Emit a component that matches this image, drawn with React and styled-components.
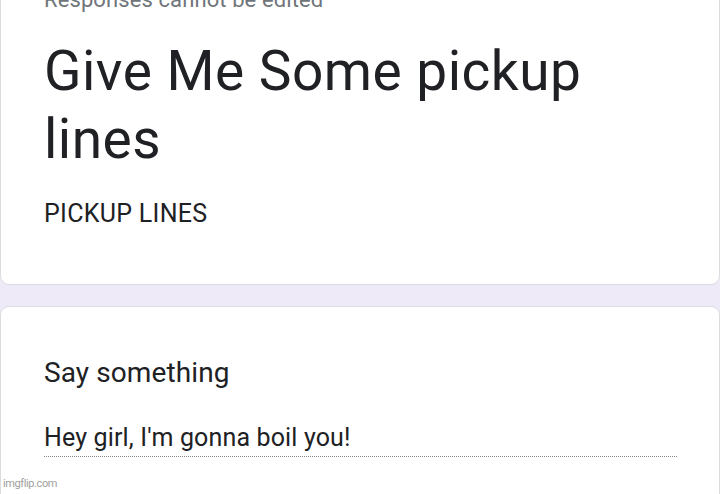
import React from "react";
import styled, { createGlobalStyle } from "styled-components";

const GlobalStyle = createGlobalStyle`
  html, body {
    margin: 0;
    padding: 0;
    background: #eeeaf7;
    font-family: Roboto, "Liberation Sans", sans-serif;
    overflow: hidden;
  }
`;

const Page = styled.div`
  width: 720px;
  height: 494px;
  display: flex;
  flex-direction: column;
  gap: 21px;
  position: relative;
  overflow: hidden;
`;

const Card = styled.section`
  background: #fff;
  border: 1px solid #dadce0;
  border-radius: 9px;
  padding: ${(p) => p.$padding || "0 43px"};
  flex-shrink: 0;
`;

const HeaderCard = styled(Card)`
  margin-top: -30px;
`;

const Notice = styled.div`
  font-size: 22px;
  line-height: 26px;
  letter-spacing: 0.1px;
  color: #70757a;
`;

const Title = styled.h1`
  margin: 24px 0 0;
  width: 610px;
  font-size: 55px;
  font-weight: 400;
  line-height: 68px;
  letter-spacing: 0.5px;
  color: #202124;
`;

const Description = styled.p`
  margin: 26px 0 0;
  font-size: 25px;
  line-height: 30px;
  letter-spacing: 0.3px;
  color: #202124;
`;

const Question = styled.div`
  margin-top: 49px;
  font-size: 28px;
  line-height: 34px;
  letter-spacing: 0.1px;
  color: #202124;
`;

const Answer = styled.div`
  margin-top: 33px;
  width: 633px;
  font-size: 25px;
  line-height: 30px;
  color: #202124;
  letter-spacing: 0.15px;
  padding-bottom: 3px;
  border-bottom: 1px dotted #80868b;
`;

const Watermark = styled.div`
  position: absolute;
  left: 3px;
  bottom: 4px;
  font-size: 11px;
  line-height: 12px;
  letter-spacing: -0.4px;
  color: #a0a0a0;
  font-family: Roboto, sans-serif;
`;

export default function App() {
  return (
    <>
      <GlobalStyle />
      <Page>
        <HeaderCard $padding="16px 43px 55px">
          <Notice>Responses cannot be edited</Notice>
          <Title>Give Me Some pickup lines</Title>
          <Description>PICKUP LINES</Description>
        </HeaderCard>
        <Card $padding="0 43px 60px">
          <Question>Say something</Question>
          <Answer>Hey girl, I'm gonna boil you!</Answer>
        </Card>
        <Watermark>imgflip.com</Watermark>
      </Page>
    </>
  );
}
